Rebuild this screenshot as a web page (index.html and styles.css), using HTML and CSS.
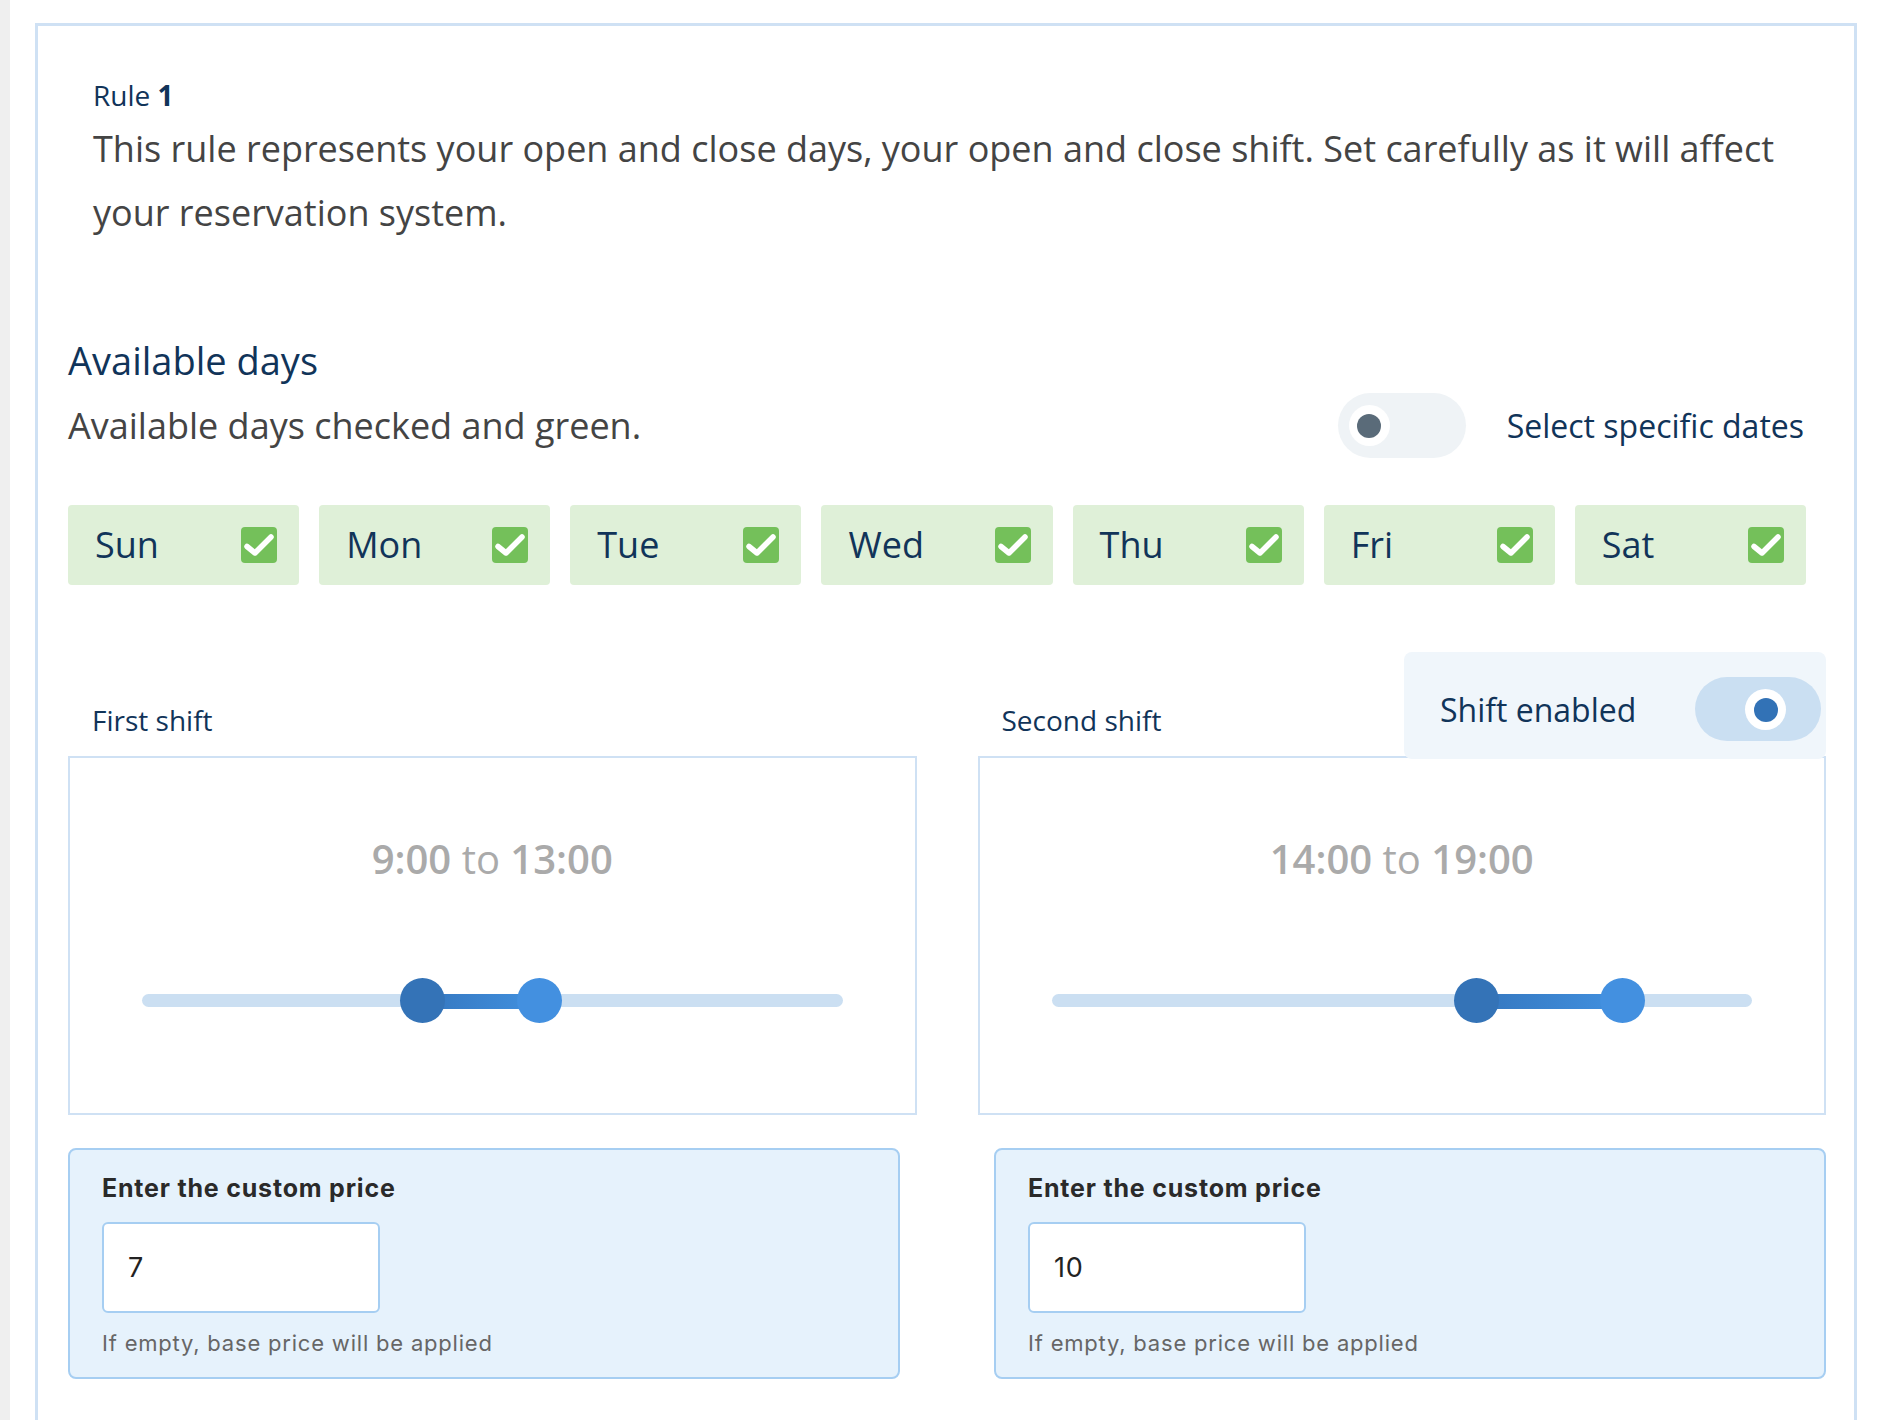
FILE: index.html
```html
<!DOCTYPE html>
<html lang="en">
<head>
<meta charset="utf-8">
<title>Rule 1 – Opening days and shifts</title>
<link rel="stylesheet" href="styles.css">
</head>
<body>
<div class="rail"></div>
<main class="main">
  <section class="rule-card">
    <header class="rule-head">
      <div class="rule-title">Rule <b>1</b></div>
      <p class="rule-desc">This rule represents your open and close days, your open and close shift. Set carefully as it will affect your reservation system.</p>
    </header>

    <div class="days">
      <h2 class="days-title">Available days</h2>
      <div class="days-bar">
        <span class="days-note">Available days checked and green.</span>
        <label class="dates-switch">
          <span class="toggle toggle-off"><span class="knob"></span></span>
          <span class="dates-label">Select specific dates</span>
        </label>
      </div>
      <div class="day-list">
        <div class="day"><span>Sun</span><svg class="check" viewBox="0 0 36 36"><rect width="36" height="36" rx="4"/><polyline points="6,19.5 14,26 30,10"/></svg></div>
        <div class="day"><span>Mon</span><svg class="check" viewBox="0 0 36 36"><rect width="36" height="36" rx="4"/><polyline points="6,19.5 14,26 30,10"/></svg></div>
        <div class="day"><span>Tue</span><svg class="check" viewBox="0 0 36 36"><rect width="36" height="36" rx="4"/><polyline points="6,19.5 14,26 30,10"/></svg></div>
        <div class="day"><span>Wed</span><svg class="check" viewBox="0 0 36 36"><rect width="36" height="36" rx="4"/><polyline points="6,19.5 14,26 30,10"/></svg></div>
        <div class="day"><span>Thu</span><svg class="check" viewBox="0 0 36 36"><rect width="36" height="36" rx="4"/><polyline points="6,19.5 14,26 30,10"/></svg></div>
        <div class="day"><span>Fri</span><svg class="check" viewBox="0 0 36 36"><rect width="36" height="36" rx="4"/><polyline points="6,19.5 14,26 30,10"/></svg></div>
        <div class="day"><span>Sat</span><svg class="check" viewBox="0 0 36 36"><rect width="36" height="36" rx="4"/><polyline points="6,19.5 14,26 30,10"/></svg></div>
      </div>
    </div>

    <div class="shifts">
      <div class="shift">
        <div class="shift-head">
          <span class="shift-name">First shift</span>
        </div>
        <div class="shift-box">
          <div class="shift-time"><b>9:00</b> to <b>13:00</b></div>
          <div class="range" style="--from: 40%; --to: 56.8%;">
            <span class="range-fill"></span>
            <span class="range-knob knob-from"></span>
            <span class="range-knob knob-to"></span>
          </div>
        </div>
      </div>
      <div class="shift">
        <div class="shift-head">
          <span class="shift-name">Second shift</span>
          <div class="shift-enable">
            <span class="shift-enable-label">Shift enabled</span>
            <span class="toggle toggle-on"><span class="knob"></span></span>
          </div>
        </div>
        <div class="shift-box">
          <div class="shift-time"><b>14:00</b> to <b>19:00</b></div>
          <div class="range" style="--from: 60.7%; --to: 81.5%;">
            <span class="range-fill"></span>
            <span class="range-knob knob-from"></span>
            <span class="range-knob knob-to"></span>
          </div>
        </div>
      </div>
    </div>

    <div class="prices">
      <div class="price">
        <label class="price-title" for="price-1">Enter the custom price</label>
        <input class="price-input" id="price-1" type="text" value="7">
        <p class="price-hint">If empty, base price will be applied</p>
      </div>
      <div class="price">
        <label class="price-title" for="price-2">Enter the custom price</label>
        <input class="price-input" id="price-2" type="text" value="10">
        <p class="price-hint">If empty, base price will be applied</p>
      </div>
    </div>
  </section>
</main>
</body>
</html>
```

FILE: styles.css
```css
* { box-sizing: border-box; }

html, body {
  margin: 0;
  height: 100%;
  overflow: hidden;
  background: #ffffff;
}

body {
  display: flex;
  font-family: "Open Sans", "Noto Sans", sans-serif;
  color: #444444;
}

.rail {
  flex: 0 0 10px;
  background: #efefef;
}

.main {
  flex: 1;
  padding: 23px 23px 0 25px;
}

/* ---- card ---- */
.rule-card {
  border: 3px solid #cfe1f4;
  border-bottom: none;
  padding: 50px 28px 80px 30px;
}

.rule-head {
  padding-left: 25px;
}

.rule-title {
  font-size: 28px;
  line-height: 39px;
  color: #113459;
}
.rule-title b { font-weight: 700; }

.rule-desc {
  margin: 2px 0 0;
  font-size: 36px;
  line-height: 64px;
  color: #444444;
  max-width: 1712px;
}

/* ---- available days ---- */
.days {
  width: 1738px;
  margin-top: 89px;
}

.days-title {
  margin: 0;
  font-weight: 400;
  font-size: 38px;
  line-height: 52px;
  color: #113459;
}

.days-bar {
  margin-top: 7px;
  height: 65px;
  display: flex;
  align-items: center;
  justify-content: space-between;
}

.days-note {
  font-size: 36px;
  line-height: 48px;
  color: #444444;
}

.dates-switch {
  display: flex;
  align-items: center;
  gap: 41px;
  padding-right: 2px;
}

.dates-label {
  font-size: 32px;
  line-height: 44px;
  color: #113459;
}

/* switch */
.toggle {
  position: relative;
  display: block;
  border-radius: 33px;
}
.toggle .knob {
  position: absolute;
  width: 41px;
  height: 41px;
  border-radius: 50%;
  background: #ffffff;
}
.toggle .knob::after {
  content: "";
  position: absolute;
  left: 8.5px;
  top: 8.5px;
  width: 24px;
  height: 24px;
  border-radius: 50%;
}

.toggle-off {
  width: 128px;
  height: 65px;
  background: #eff3f6;
}
.toggle-off .knob { left: 11px; top: 12px; }
.toggle-off .knob::after { background: #5a6b79; }

.toggle-on {
  width: 126px;
  height: 64px;
  background: #cadff2;
}
.toggle-on .knob { left: 50px; top: 12px; }
.toggle-on .knob::after { background: #3272b6; }

.day-list {
  margin-top: 47px;
  display: flex;
  gap: 20px;
}

.day {
  flex: 1;
  height: 80px;
  display: flex;
  align-items: center;
  justify-content: space-between;
  padding: 0 22px 0 27px;
  background: #dff0d8;
  border-radius: 4px;
  font-size: 36px;
  line-height: 48px;
  color: #113459;
}

.check {
  width: 36px;
  height: 36px;
  display: block;
}
.check rect { fill: #74c05a; }
.check polyline {
  fill: none;
  stroke: #ffffff;
  stroke-width: 5.5;
  stroke-linecap: round;
  stroke-linejoin: round;
}

/* ---- shifts ---- */
.shifts {
  margin-top: 116px;
  width: 1758px;
  display: grid;
  grid-template-columns: 1fr 1fr;
  column-gap: 61px;
}

.shift-head {
  position: relative;
  height: 55px;
  padding-left: 24px;
}

.shift-name {
  display: block;
  font-size: 28px;
  line-height: 39px;
  color: #113459;
}

.shift-enable {
  position: absolute;
  right: 0;
  bottom: -3px;
  z-index: 1;
  width: 422px;
  height: 107px;
  padding: 7px 5px 0 36px;
  display: flex;
  align-items: center;
  justify-content: space-between;
  background: #f0f6fb;
  border-radius: 8px;
}

.shift-enable-label {
  font-size: 32px;
  line-height: 45px;
  color: #113459;
}

.shift-box {
  height: 359px;
  border: 2px solid #cfe1f4;
  padding: 74px 72px 0;
}

.shift-time {
  text-align: center;
  font-size: 40px;
  line-height: 53px;
  color: #aaaaaa;
}
.shift-time b { font-weight: 600; }

.range {
  position: relative;
  margin-top: 93px;
  height: 45px;
}
.range::before {
  content: "";
  position: absolute;
  left: 0;
  right: 0;
  top: 16px;
  height: 13px;
  border-radius: 7px;
  background: #cbdff2;
}
.range-fill {
  position: absolute;
  top: 16px;
  height: 15px;
  left: var(--from);
  width: calc(var(--to) - var(--from));
  background: linear-gradient(90deg, #3577bf, #4190df);
}
.range-knob {
  position: absolute;
  top: 0;
  width: 45px;
  height: 45px;
  margin-left: -22.5px;
  border-radius: 50%;
}
.knob-from { left: var(--from); background: #3473b7; }
.knob-to { left: var(--to); background: #4390e0; }

/* ---- custom prices ---- */
.prices {
  margin-top: 33px;
  width: 1758px;
  display: grid;
  grid-template-columns: 1fr 1fr;
  column-gap: 94px;
}

.price {
  height: 231px;
  border: 2px solid #a6cef2;
  border-radius: 8px;
  background: #e6f2fc;
  padding: 23px 32px 0;
  font-family: Inter, "Liberation Sans", sans-serif;
  letter-spacing: 0.8px;
}

.price-title {
  display: block;
  font-size: 25px;
  line-height: 30px;
  font-weight: 700;
  color: #2a2a2a;
}

.price-input {
  display: block;
  margin-top: 19px;
  width: 278px;
  height: 91px;
  border: 2px solid #a6cef2;
  border-radius: 6px;
  background: #ffffff;
  padding: 0 24px;
  font-family: Inter, "Liberation Sans", sans-serif;
  font-size: 27px;
  letter-spacing: 0.8px;
  color: #222222;
  outline: none;
}

.price-hint {
  margin: 16px 0 0;
  font-size: 22px;
  line-height: 28px;
  color: #666666;
}
```
